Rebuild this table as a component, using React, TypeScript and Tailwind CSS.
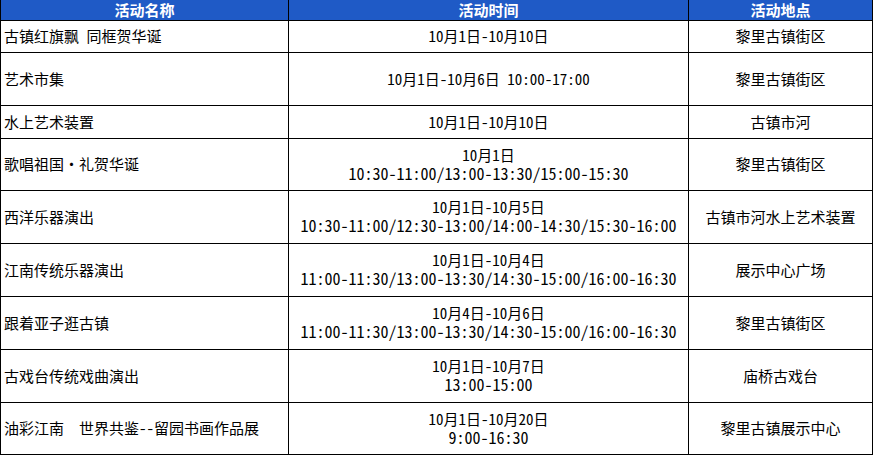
import React from 'react';

interface EventRow {
  name: string;
  date: string;
  hours?: string;
  place: string;
  h: string;
}

const events: EventRow[] = [
  { name: '古镇红旗飘 同框贺华诞', date: '10月1日-10月10日', place: '黎里古镇街区', h: 'h-[32px]' },
  { name: '艺术市集', date: '10月1日-10月6日 10:00-17:00', place: '黎里古镇街区', h: 'h-[53px]' },
  { name: '水上艺术装置', date: '10月1日-10月10日', place: '古镇市河', h: 'h-[33px]' },
  { name: '歌唱祖国·礼贺华诞', date: '10月1日', hours: '10:30-11:00/13:00-13:30/15:00-15:30', place: '黎里古镇街区', h: 'h-[52px]' },
  { name: '西洋乐器演出', date: '10月1日-10月5日', hours: '10:30-11:00/12:30-13:00/14:00-14:30/15:30-16:00', place: '古镇市河水上艺术装置', h: 'h-[53px]' },
  { name: '江南传统乐器演出', date: '10月1日-10月4日', hours: '11:00-11:30/13:00-13:30/14:30-15:00/16:00-16:30', place: '展示中心广场', h: 'h-[53px]' },
  { name: '跟着亚子逛古镇', date: '10月4日-10月6日', hours: '11:00-11:30/13:00-13:30/14:30-15:00/16:00-16:30', place: '黎里古镇街区', h: 'h-[53px]' },
  { name: '古戏台传统戏曲演出', date: '10月1日-10月7日', hours: '13:00-15:00', place: '庙桥古戏台', h: 'h-[53px]' },
  { name: '油彩江南  世界共鉴--留园书画作品展', date: '10月1日-10月20日', hours: '9:00-16:30', place: '黎里古镇展示中心', h: 'h-[52px]' },
];

const App: React.FC = () => {
  return (
    <div className="w-[873px] h-[455px] bg-white">
      <table
        className="w-[872px] table-fixed border-collapse text-[15px] leading-[18px] text-black"
        style={{ fontFamily: '"Noto Sans Mono CJK SC", "Liberation Mono", "Noto Sans CJK SC", monospace' }}
      >
        <colgroup>
          <col className="w-[288px]" />
          <col className="w-[400px]" />
          <col className="w-[184px]" />
        </colgroup>
        <thead>
          <tr className="h-[20px] bg-[#1f5ac6] text-white font-bold">
            <th className="border border-black border-t-0 p-0 text-center">活动名称</th>
            <th className="border border-black border-t-0 p-0 text-center">活动时间</th>
            <th className="border border-black border-t-0 p-0 text-center">活动地点</th>
          </tr>
        </thead>
        <tbody>
          {events.map((ev, i) => (
            <tr key={i} className={ev.h}>
              <td className="border border-black px-[3px] py-0 text-left whitespace-pre">{ev.name}</td>
              <td className="border border-black p-0 text-center">
                <div className="whitespace-pre">{ev.date}</div>
                {ev.hours && <div className="whitespace-pre text-[16px] leading-[19px]">{ev.hours}</div>}
              </td>
              <td className="border border-black p-0 text-center">{ev.place}</td>
            </tr>
          ))}
        </tbody>
      </table>
    </div>
  );
};

export default App;
